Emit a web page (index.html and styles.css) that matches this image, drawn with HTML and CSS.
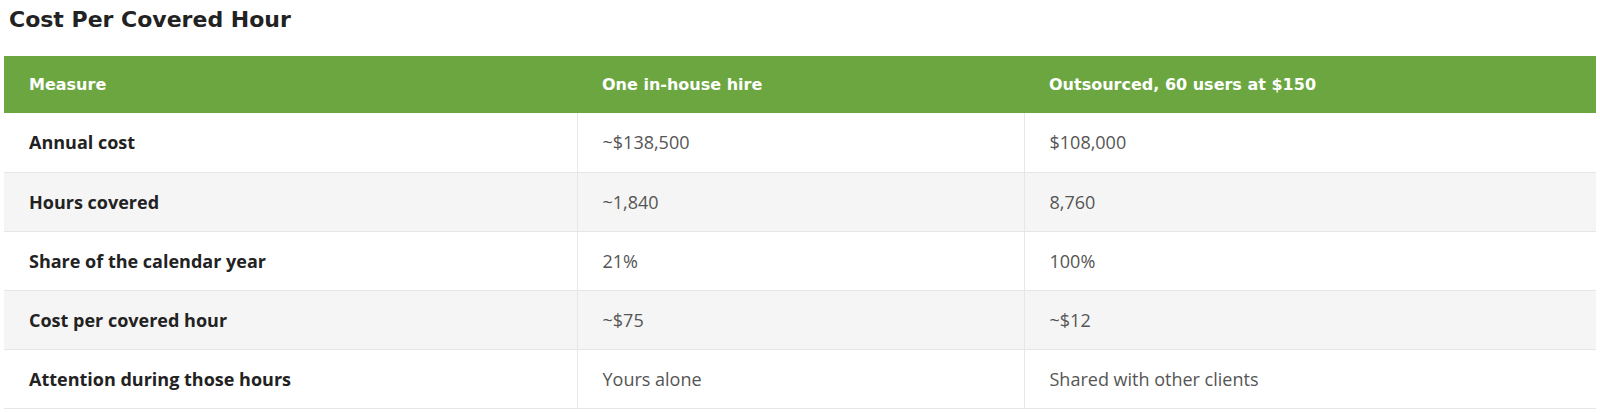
FILE: index.html
```html
<!DOCTYPE html>
<html lang="en">
<head>
<meta charset="utf-8">
<title>Cost Per Covered Hour</title>
<link rel="stylesheet" href="styles.css">
</head>
<body>
<div class="wrap">
  <h2 class="title">Cost Per Covered Hour</h2>
  <table class="cmp">
    <colgroup>
      <col class="c1"><col class="c2"><col class="c3">
    </colgroup>
    <thead>
      <tr>
        <th>Measure</th>
        <th>One in-house hire</th>
        <th>Outsourced, 60 users at $150</th>
      </tr>
    </thead>
    <tbody>
      <tr><td>Annual cost</td><td>~$138,500</td><td>$108,000</td></tr>
      <tr><td>Hours covered</td><td>~1,840</td><td>8,760</td></tr>
      <tr><td>Share of the calendar year</td><td>21%</td><td>100%</td></tr>
      <tr><td>Cost per covered hour</td><td>~$75</td><td>~$12</td></tr>
      <tr><td>Attention during those hours</td><td>Yours alone</td><td>Shared with other clients</td></tr>
    </tbody>
  </table>
</div>
</body>
</html>
```
FILE: styles.css
```css
html, body {
  margin: 0;
  padding: 0;
  background: #ffffff;
}
.wrap {
  padding: 0 4px;
}
.title {
  margin: 0;
  padding: 6px 0 0 5px;
  height: 56px;
  box-sizing: border-box;
  font-family: "DejaVu Sans", sans-serif;
  font-weight: 700;
  font-size: 22px;
  line-height: 28px;
  color: #222222;
}
.cmp {
  width: 1592px;
  border-collapse: collapse;
  table-layout: fixed;
  font-family: "Open Sans", sans-serif;
  font-size: 18px;
}
.c1 { width: 573px; }
.c2 { width: 447px; }
.c3 { width: 572px; }
.cmp th {
  background: #6ca640;
  color: #ffffff;
  font-family: "DejaVu Sans", sans-serif;
  font-weight: 700;
  font-size: 16px;
  text-align: left;
  height: 57px;
  padding: 0 25px;
  box-sizing: border-box;
}
.cmp td {
  height: 59px;
  padding: 0 25px;
  box-sizing: border-box;
  color: #555555;
  border-bottom: 1px solid #e6e6e6;
  border-left: 1px solid #e6e6e6;
}
.cmp td:first-child {
  border-left: none;
  font-weight: 700;
  color: #222222;
}
.cmp tbody tr:nth-child(even) td {
  background: #f5f5f5;
}
```
